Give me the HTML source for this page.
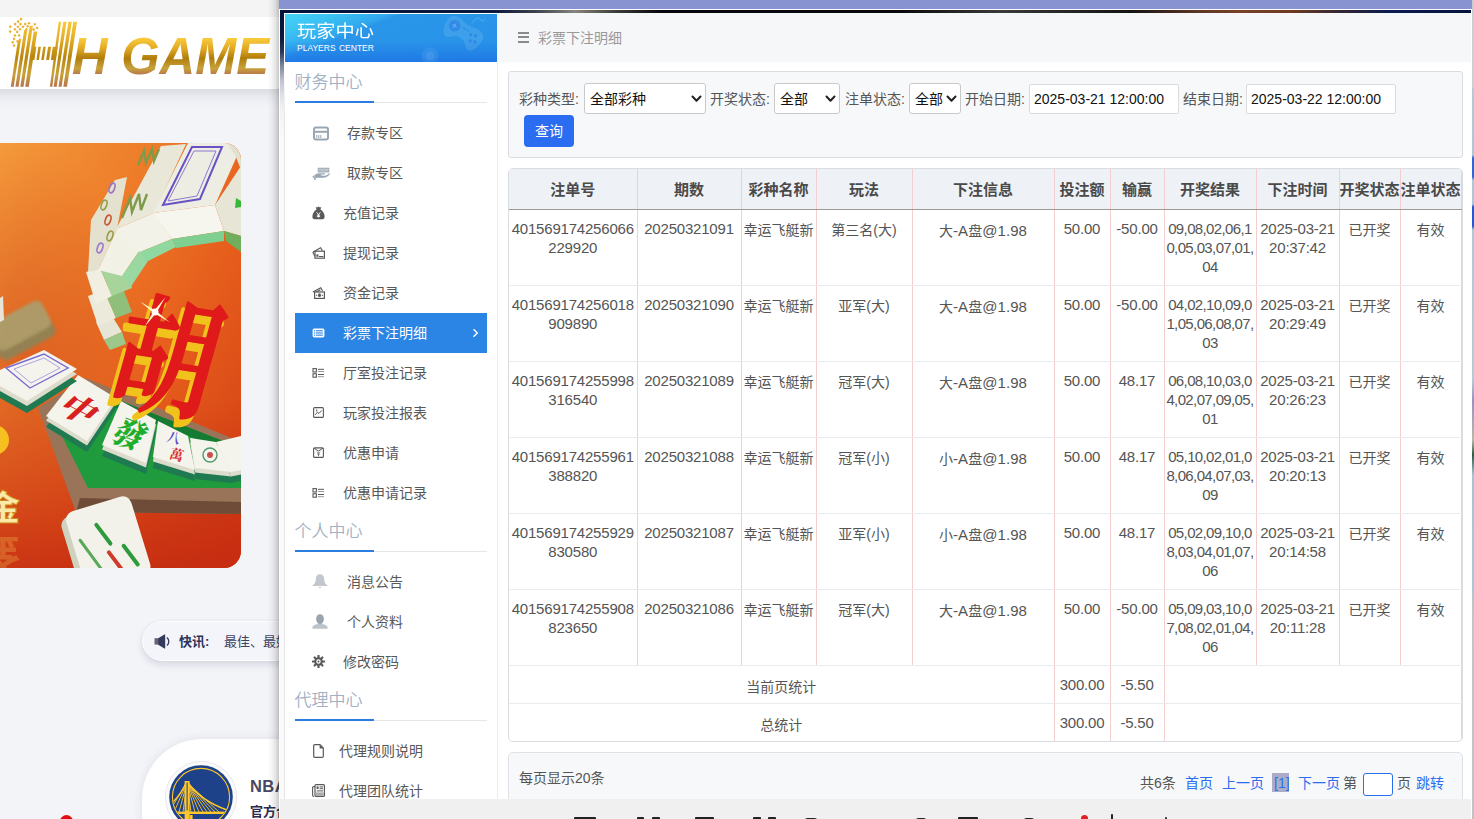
<!DOCTYPE html>
<html lang="zh-CN">
<head>
<meta charset="utf-8">
<title>玩家中心 - 彩票下注明细</title>
<style>
*{box-sizing:border-box;margin:0;padding:0}
html,body{width:1474px;height:819px;overflow:hidden}
body{position:relative;background:#f3f4f8;font-family:"Liberation Sans","Noto Sans CJK SC",sans-serif;color:#555;font-size:14px}
.abs{position:absolute}
/* ---------- underlying page ---------- */
#pg-top{left:0;top:0;width:280px;height:17px;background:#f4f4f4}
#pg-head{left:0;top:17px;width:280px;height:72px;background:#fff}
#pg-sh{left:0;top:89px;width:280px;height:19px;background:linear-gradient(180deg,rgba(20,20,40,.105) 0%,rgba(20,20,40,.05) 35%,rgba(20,20,40,.015) 70%,rgba(20,20,40,0) 100%)}
#banner{left:0;top:143px;width:241px;height:425px;border-radius:0 17px 17px 0;overflow:hidden;background:#f07a1e}
#ticker{left:142px;top:621px;width:200px;height:40px;border-radius:20px;background:#f4f5fa;border:1.5px solid #fdfdff;box-shadow:0 4px 7px rgba(40,50,100,.13),0 0 3px rgba(40,50,100,.06)}
#ticker .k{left:36px;top:9.8px;font-size:13px;line-height:20px;font-weight:bold;color:#2c3458;white-space:nowrap}
#ticker .v{left:81px;top:9.8px;font-size:13px;line-height:20px;color:#3c4462;white-space:nowrap}
#ticker svg{position:absolute;left:11px;top:11.6px}
#nba{left:142px;top:739px;width:300px;height:140px;border-radius:60px;background:#fff;box-shadow:0 0 10px rgba(40,50,100,.10)}
#nba .a{left:108px;top:37px;font-size:16.5px;line-height:20px;font-weight:bold;color:#4a4762;font-family:"Liberation Sans",sans-serif;letter-spacing:.4px}
#nba .b{left:108px;top:62.6px;font-size:13px;line-height:20px;font-weight:bold;color:#2c2c4c;white-space:nowrap}
#nba svg{position:absolute;left:22px;top:21px}
#redx{left:60px;top:815px;width:13px;height:13px;border-radius:50%;background:#e01010}
/* ---------- popup ---------- */
#pshadow{left:267px;top:0;width:12px;height:819px;background:linear-gradient(90deg,rgba(0,0,0,0) 0%,rgba(0,0,0,.03) 35%,rgba(0,0,0,.10) 70%,rgba(0,0,0,.22) 100%)}
#ptitle{left:279px;top:0;width:1193px;height:9px;background:#8893d2}
#pframe{left:279px;top:9px;width:1193px;height:810px;background:#fff}
#ftop{left:280px;top:10px;width:1191px;height:3px;background:linear-gradient(90deg,#04133c 0px,#0a1a3e 215px,#3c424c 255px,#86867e 295px,#3e3e3a 335px,#05070f 380px,#0a0a0c 620px,#3a3a3a 720px,#141414 850px,#5a3426 915px,#7a4028 960px,#6e3a24 1010px,#2a2438 1070px,#0a1c50 1110px,#04143c 1191px)}
#fleft{left:280px;top:10px;width:4px;height:809px;background:linear-gradient(180deg,#04133c 0px,#08183e 27px,#2a3858 42px,#8088a0 56px,#c0c4d0 71px,#e0e2e8 86px,#f2f2f5 100px,#fafafa 130px,#fafafa 100%)}
#fleft2{left:284px;top:13px;width:1px;height:806px;background:linear-gradient(180deg,#fff 0px,#fff 60px,#e4e4e4 110px,#e4e4e4 100%)}
#rstrip{left:1472px;top:0;width:2px;height:819px;background:linear-gradient(180deg,#cdcdcd 0px,#cfcfcf 86px,#b4c8d6 90px,#b0c6d6 155px,#2a66dc 158px,#2a66dc 177px,#b0c6d6 180px,#b0c6d6 204px,#2058d8 207px,#2058d8 226px,#b2c8d8 230px,#b4cad8 380px,#9a90c8 400px,#b8b8a8 440px,#2a5a48 455px,#a8c4d4 475px,#aac4d4 590px,#c4c4c4 610px,#c2c2c2 819px)}
#side{left:285px;top:13px;width:212px;height:786px;background:#fff;overflow:hidden}
#main{left:497px;top:13px;width:974px;height:786px;background:#fff;overflow:hidden}
#botbar{left:280px;top:799px;width:1191px;height:20px;background:#f0f0f0}

/* ---------- main panel (coords relative to #main at 497,13) ---------- */
#topbar{left:0;top:0;width:974px;height:49px;background:#f6f7f9}
#topbar .ham{left:20.5px;top:18.5px;width:11px;height:12px}
#topbar .ham i{display:block;height:2px;background:#8a8a8a;margin-bottom:2.5px}
#topbar .tt{left:41px;top:16px;font-size:14px;line-height:18px;color:#999;white-space:nowrap}
#filter{left:11px;top:58px;width:955px;height:87px;border:1px solid #d9dde2;border-radius:3px;background:#f7f8fa}
#filter .lb{font-size:14px;line-height:20px;color:#555;white-space:nowrap;top:16.6px}
.sel{background:#fff;border:1px solid #c9c9c9;border-radius:3px;height:31px;top:11px;font-size:14px;line-height:30.5px;color:#111;padding-left:5px;white-space:nowrap}
.sel svg{position:absolute;right:3px;top:11px}
.inp{background:#fff;border:1px solid #dcdcdc;border-radius:2px;height:30px;top:12px;font-size:14px;line-height:28px;color:#111;padding-left:4px;white-space:nowrap;font-family:"Liberation Sans",sans-serif}
#qbtn{left:15px;top:43px;width:50px;height:32px;border-radius:4px;background:#2a6df0;color:#fff;font-size:14px;line-height:32.5px;text-align:center}
#tblwrap{left:11px;top:155px;width:955px;height:574px;border:1px solid #d9dde2;border-radius:5px;overflow:hidden;background:#fff}
table{border-collapse:collapse;table-layout:fixed;width:952px;position:absolute;left:0;top:0}
th{height:40px;background:#eef2f7;font-size:15px;font-weight:bold;color:#4a4a4a;text-align:center;vertical-align:middle;border-right:1px solid #f5cfd0;border-bottom:1px solid #a29797;white-space:nowrap;padding:0;overflow:hidden}
td{font-size:14px;line-height:19px;color:#555;text-align:center;vertical-align:top;border-right:1px solid #f5cfd0;border-bottom:1px solid #e9ecef;padding:11px 0 0 0;height:76px;word-break:break-all;overflow:hidden}
td.n{font-family:"Liberation Sans",sans-serif;font-size:15px;letter-spacing:-0.2px}
td.rs{white-space:nowrap;letter-spacing:-0.62px}
td.n{padding-top:9.5px}
td .e{font-family:"Liberation Sans",sans-serif;font-size:15px;letter-spacing:0.1px}
tr.st td{height:38px;padding-top:12px}
tr.st td.n{padding-top:9.5px}
td .e{font-family:"Liberation Sans",sans-serif;font-size:15px;letter-spacing:0.1px}
tr.st td.lab{border-right-color:#f5cfd0}
#pager{left:11px;top:739px;width:955px;height:60px;border:1px solid #dee2e6;border-radius:5px;background:#f7f8fa}
#pager .l{left:10px;top:15px;font-size:14px;line-height:20px;color:#555;white-space:nowrap}

/* ---------- sidebar (coords relative to #side at 285,13) ---------- */
#shead{left:0;top:1px;width:212px;height:48px;background:linear-gradient(180deg,rgba(30,110,230,0) 55%,rgba(24,100,226,.55) 100%),linear-gradient(159deg,#45d3f6 0%,#3cc4f3 14%,#31a8ee 31%,#2a96e9 35%,#2792e8 100%);overflow:hidden}
#shead .t1{left:12px;top:7px;font-size:17px;line-height:22px;color:#fff;white-space:nowrap;font-weight:400;transform:scaleX(1.13);transform-origin:0 0}
#shead .t2{left:12px;top:29px;font-size:8.5px;line-height:10px;color:#fff;white-space:nowrap;font-family:"Liberation Sans",sans-serif;word-spacing:1px}
.sec{left:9.5px;font-size:17px;line-height:22px;color:#9fb1c4;font-weight:350;white-space:nowrap}
.secl{left:10px;width:192px;height:1px;background:#e3e6ea}
.secb{left:10px;width:79px;height:2.4px;background:#2b7de1}
.mi{left:10px;width:192px;height:40px}
.mi .tx{position:absolute;top:10px;font-size:14px;line-height:20px;color:#585858;white-space:nowrap}
.mi svg{position:absolute;overflow:visible}
.mi.act{background:#2b85e4}
.mi.act .tx{color:#fff}
#pager .p{top:20px;font-size:14px;line-height:20px;color:#555;white-space:nowrap}
#pager .p.a{color:#2a6df0}
#pager .cur{left:763px;top:20px;width:17px;height:19px;background:#abadc8}
#pager .box{left:854px;top:20px;width:30px;height:23px;border:1.5px solid #2a6df0;border-radius:3px;background:#fff}
</style>
</head>
<body>
<!-- underlying page -->
<div id="pg-top" class="abs"></div>
<div id="pg-head" class="abs"></div><div id="pg-sh" class="abs"></div>
<svg id="logo" class="abs" style="left:0;top:17px" width="280" height="72" viewBox="0 0 280 72">
<defs><linearGradient id="gd" gradientUnits="userSpaceOnUse" x1="0" y1="4" x2="0" y2="70"><stop offset="0" stop-color="#f9ca3c"/><stop offset=".28" stop-color="#e3ac26"/><stop offset=".55" stop-color="#b9860f"/><stop offset=".8" stop-color="#c9a23a"/><stop offset="1" stop-color="#b5734e"/></linearGradient>
<linearGradient id="gt" gradientUnits="userSpaceOnUse" x1="0" y1="21" x2="0" y2="58"><stop offset="0" stop-color="#fbcc3e"/><stop offset=".3" stop-color="#dfa722"/><stop offset=".55" stop-color="#b07d0c"/><stop offset=".82" stop-color="#c8a23c"/><stop offset="1" stop-color="#b6744e"/></linearGradient></defs>
<g fill="url(#gd)"><polygon points="10.8,69.8 13.7,69.8 20.8,23.4 17.9,23.4"/><polygon points="15.4,69.8 18.6,69.8 27.3,13.1 24.2,13.1"/><polygon points="20.3,69.8 23.5,69.8 32.9,8.7 29.7,8.7"/><polygon points="25.2,69.8 28.8,69.8 37.3,14.6 33.7,14.6"/><polygon points="49.9,69.8 52.3,69.8 61.1,4.8 58.7,4.8"/><polygon points="53.6,69.8 56.7,69.8 66.5,4.8 63.3,4.8"/><polygon points="58.5,69.8 61.6,69.8 71.8,4.8 68.4,4.8"/><polygon points="63.3,69.8 67.0,69.8 77.0,4.8 73.3,4.8"/><polygon points="31.1,42.9 34.4,42.9 36.4,29.7 33.1,29.7"/><polygon points="36.4,42.9 38.9,42.9 40.9,29.7 38.3,29.7"/><polygon points="41.3,42.9 43.8,42.9 45.8,29.7 43.2,29.7"/><polygon points="46.1,42.9 49.1,42.9 51.1,29.7 48.1,29.7"/><polygon points="50.8,42.9 55.7,42.9 57.7,29.7 52.8,29.7"/></g><g fill="#e8b02c"><rect x="19.9" y="1.0" width="2.2" height="2.2" transform="rotate(45 21.0 2.1)"/><rect x="17.0" y="3.5" width="2.2" height="2.2" transform="rotate(45 18.1 4.6)"/><rect x="14.1" y="6.0" width="2.2" height="2.2" transform="rotate(45 15.2 7.1)"/><rect x="19.4" y="6.0" width="2.2" height="2.2" transform="rotate(45 20.5 7.1)"/><rect x="24.1" y="6.0" width="2.2" height="2.2" transform="rotate(45 25.2 7.1)"/><rect x="27.9" y="5.2" width="2.2" height="2.2" transform="rotate(45 29.0 6.3)"/><rect x="33.8" y="6.2" width="2.2" height="2.2" transform="rotate(45 34.9 7.3)"/><rect x="9.2" y="8.6" width="2.2" height="2.2" transform="rotate(45 10.3 9.7)"/><rect x="16.8" y="8.6" width="2.2" height="2.2" transform="rotate(45 17.9 9.7)"/><rect x="21.9" y="8.6" width="2.2" height="2.2" transform="rotate(45 23.0 9.7)"/><rect x="26.6" y="8.1" width="2.2" height="2.2" transform="rotate(45 27.7 9.2)"/><rect x="36.0" y="9.9" width="2.2" height="2.2" transform="rotate(45 37.1 11.0)"/><rect x="13.8" y="11.1" width="2.2" height="2.2" transform="rotate(45 14.9 12.2)"/><rect x="18.9" y="11.1" width="2.2" height="2.2" transform="rotate(45 20.0 12.2)"/><rect x="25.3" y="11.1" width="2.2" height="2.2" transform="rotate(45 26.4 12.2)"/><rect x="32.6" y="11.5" width="2.2" height="2.2" transform="rotate(45 33.7 12.6)"/><rect x="9.0" y="13.5" width="2.2" height="2.2" transform="rotate(45 10.1 14.6)"/><rect x="16.0" y="13.8" width="2.2" height="2.2" transform="rotate(45 17.1 14.9)"/><rect x="13.8" y="17.4" width="2.2" height="2.2" transform="rotate(45 14.9 18.5)"/><rect x="18.0" y="17.4" width="2.2" height="2.2" transform="rotate(45 19.1 18.5)"/><rect x="12.9" y="20.8" width="2.2" height="2.2" transform="rotate(45 14.0 21.9)"/><rect x="18.9" y="21.8" width="2.2" height="2.2" transform="rotate(45 20.0 22.9)"/><rect x="11.6" y="24.2" width="2.2" height="2.2" transform="rotate(45 12.7 25.3)"/><rect x="16.3" y="23.1" width="2.2" height="2.2" transform="rotate(45 17.4 24.2)"/><rect x="12.9" y="27.5" width="2.2" height="2.2" transform="rotate(45 14.0 28.6)"/></g>
<text x="72" y="56.6" font-family="'Liberation Sans',sans-serif" font-weight="bold" font-style="italic" font-size="51" fill="url(#gt)" textLength="197" lengthAdjust="spacingAndGlyphs">H GAME</text>
</svg>
<div id="banner" class="abs"><svg width="241" height="425" viewBox="0 0 241 425" style="position:absolute;left:0;top:0">
<defs><linearGradient id="bg1" x1="0" y1="0" x2="1" y2="1"><stop offset="0" stop-color="#f49a3c"/><stop offset=".3" stop-color="#ee7e2a"/><stop offset=".6" stop-color="#e65e1c"/><stop offset="1" stop-color="#d03a14"/></linearGradient>
<linearGradient id="bg2" x1="0" y1="0" x2="0" y2="1"><stop offset=".6" stop-color="#c82a10" stop-opacity="0"/><stop offset="1" stop-color="#c22810" stop-opacity=".8"/></linearGradient><filter id="blr" x="-20%" y="-20%" width="140%" height="140%"><feGaussianBlur stdDeviation="1.6"/></filter><radialGradient id="bg3" cx=".1" cy=".5" r=".5"><stop offset="0" stop-color="#c8401a" stop-opacity=".45"/><stop offset="1" stop-color="#c8401a" stop-opacity="0"/></radialGradient></defs>
<rect width="241" height="425" fill="url(#bg1)"/><rect width="241" height="425" fill="url(#bg2)"/><rect width="241" height="425" fill="url(#bg3)"/>
<polygon points="96.0,179.0 112.0,173.0 122.0,189.0 104.0,197.0" fill="#e6e5d6" /><polygon points="104.0,197.0 122.0,189.0 126.0,201.0 110.0,207.0" fill="#9cc88c" /><polygon points="88.0,153.0 104.0,147.0 116.0,175.0 98.0,183.0" fill="#eceadb" /><polygon points="104.0,147.0 122.0,143.0 132.0,169.0 116.0,175.0" fill="#8fbf7a" /><polygon points="86.0,129.0 100.0,125.0 112.0,153.0 96.0,161.0" fill="#f0efe2" /><polygon points="100.0,125.0 124.0,119.0 132.0,145.0 112.0,153.0" fill="#a6d49a" /><polygon points="91.0,77.0 115.0,37.0 127.0,34.0 117.0,86.0 98.0,127.0 88.0,129.0" fill="#e4e2cf" /><polygon points="98.0,127.0 117.0,86.0 140.0,107.0 122.0,133.0" fill="#f2f1e6" /><polygon points="122.0,133.0 140.0,107.0 150.0,115.0 130.0,145.0" fill="#9ad8a2" /><ellipse cx="112" cy="45" rx="2.6" ry="5" fill="none" stroke="#9a78c8" stroke-width="1.6" transform="rotate(20 112 45)"/><ellipse cx="104" cy="62" rx="2.6" ry="5" fill="none" stroke="#98a04a" stroke-width="1.6" transform="rotate(20 104 62)"/><ellipse cx="108" cy="77" rx="2.6" ry="5" fill="none" stroke="#c85a3a" stroke-width="1.6" transform="rotate(20 108 77)"/><ellipse cx="100" cy="105" rx="2.6" ry="5" fill="none" stroke="#a07ac8" stroke-width="1.6" transform="rotate(20 100 105)"/><ellipse cx="110" cy="93" rx="2.6" ry="5" fill="none" stroke="#98a04a" stroke-width="1.6" transform="rotate(20 110 93)"/><polygon points="116.0,86.0 161.0,3.0 186.0,1.0 154.0,70.0" fill="#e9e8d8" /><polygon points="116.0,86.0 154.0,70.0 172.0,96.0 140.0,109.0" fill="#f3f2e8" /><polygon points="140.0,109.0 172.0,96.0 176.0,104.0 146.0,119.0" fill="#8fd8a0" /><path d="M138,22 l6,-14 l2,12 l6,-14 l2,12 l5,-12" fill="none" stroke="#7f9a4a" stroke-width="2.4"/><path d="M122,75 l8,-20 l2,14 l7,-18 l2,16 l6,-16" fill="none" stroke="#7f9a4a" stroke-width="2.4"/><polygon points="153.0,70.0 188.0,0.0 229.0,0.0 237.0,13.0 215.0,62.0" fill="#eeede3" /><polygon points="153.0,70.0 215.0,62.0 224.0,88.0 172.0,96.0" fill="#f6f5ee" /><polygon points="172.0,96.0 224.0,88.0 224.0,98.0 176.0,105.0" fill="#7fd090" /><polygon points="163.0,62.0 192.0,4.0 222.0,4.0 200.0,56.0" fill="none" stroke="#6a52c4" stroke-width="2"/><polygon points="168.0,58.0 194.0,8.0 216.0,8.0 197.0,53.0" fill="none" stroke="#8a78d4" stroke-width="1"/><polygon points="227.0,0.0 241.0,0.0 241.0,27.0 236.0,14.0" fill="#e2e1d0"/><polygon points="215.0,62.0 241.0,23.0 241.0,93.0 224.0,88.0" fill="#e6e5d6" /><polygon points="224.0,88.0 241.0,93.0 241.0,109.0 226.0,98.0" fill="#6fae5c" /><polygon points="236.0,55.0 241.0,58.0 241.0,64.0 235.0,65.0" fill="#38b838" /><polygon points="38.0,265.0 86.0,235.0 241.0,299.0 241.0,371.0 76.0,369.0" fill="#9a7458" /><polygon points="76.0,369.0 241.0,371.0 241.0,359.0 80.0,355.0" fill="#6e4c38" /><polygon points="56.0,281.0 98.0,249.0 241.0,305.0 241.0,345.0 88.0,345.0" fill="#1f9a3c" /><polygon points="56.0,281.0 98.0,249.0 241.0,305.0 241.0,313.0 100.0,259.0 64.0,287.0" fill="#157a32" /><polygon points="231.0,340.0 216.0,310.0 241.0,304.0 241.0,338.0" fill="#1f7a52" /><polygon points="231.0,333.6 216.0,303.6 241.0,297.6 241.0,331.6" fill="#dcdbcc" /><polygon points="231.0,329.0 216.0,299.0 241.0,293.0 241.0,327.0" fill="#f5f4ec" /><polygon points="195.0,336.0 190.0,306.0 216.0,310.0 231.0,340.0" fill="#1f7a52" /><polygon points="195.0,329.6 190.0,299.6 216.0,303.6 231.0,333.6" fill="#dcdbcc" /><polygon points="195.0,325.0 190.0,295.0 216.0,299.0 231.0,329.0" fill="#f5f4ec" /><circle cx="210" cy="312" r="7" fill="none" stroke="#4a9a6a" stroke-width="1.4"/><circle cx="210" cy="312" r="3" fill="#c85050"/><polygon points="153.0,325.0 158.0,289.0 188.0,304.0 195.0,338.0" fill="#1f7a52" /><polygon points="153.0,318.6 158.0,282.6 188.0,297.6 195.0,331.6" fill="#dcdbcc" /><polygon points="153.0,314.0 158.0,278.0 188.0,293.0 195.0,327.0" fill="#f5f4ec" /><polygon points="102.0,313.0 121.0,269.0 156.0,288.0 146.0,331.0" fill="#1f7a52" /><polygon points="102.0,306.6 121.0,262.6 156.0,281.6 146.0,324.6" fill="#dcdbcc" /><polygon points="102.0,302.0 121.0,258.0 156.0,277.0 146.0,320.0" fill="#f5f4ec" /><polygon points="46.0,284.0 78.0,243.0 116.0,266.0 87.0,309.0" fill="#1f7a52" /><polygon points="46.0,277.6 78.0,236.6 116.0,259.6 87.0,302.6" fill="#dcdbcc" /><polygon points="46.0,273.0 78.0,232.0 116.0,255.0 87.0,298.0" fill="#f5f4ec" /><polygon points="0.0,239.0 44.0,219.0 77.0,238.0 27.0,270.0 0.0,255.0" fill="#1f7a52" /><polygon points="0.0,232.0 44.0,212.0 77.0,231.0 27.0,263.0 0.0,248.0" fill="#dcdbcc" /><polygon points="0.0,227.0 44.0,207.0 77.0,226.0 27.0,258.0 0.0,243.0" fill="#f5f4ec" /><polygon points="6.0,225.0 44.0,211.0 68.0,225.0 30.0,245.0" fill="none" stroke="#7a6ad0" stroke-width="1.4"/><polygon points="14.0,226.0 44.0,215.0 60.0,225.0 31.0,240.0" fill="none" stroke="#9a8ce0" stroke-width=".8"/><text x="0" y="0" text-anchor="middle" dominant-baseline="central" font-family="'Noto Serif CJK SC',serif" font-weight="900" font-size="34" fill="#d82020" transform="translate(81,265) rotate(27) skewX(-20) scale(1,.9)">中</text><text x="0" y="0" text-anchor="middle" dominant-baseline="central" font-family="'Noto Serif CJK SC',serif" font-weight="900" font-size="32" fill="#1fae2c" transform="translate(131,289) rotate(20) skewX(-14) scale(.95,1.05)">發</text><text x="0" y="0" text-anchor="middle" dominant-baseline="central" font-family="'Noto Serif CJK SC',serif" font-weight="700" font-size="13" fill="#5a4ac8" transform="translate(174,294) rotate(16)">八</text><text x="0" y="0" text-anchor="middle" dominant-baseline="central" font-family="'Noto Serif CJK SC',serif" font-weight="700" font-size="14" fill="#d83030" transform="translate(177,311) rotate(16)">萬</text><g transform="translate(100,387) rotate(-17)"><rect x="-36" y="-22" width="70" height="84" rx="9" fill="#cfd2bf"/><rect x="-30" y="-26" width="68" height="82" rx="9" fill="#f2f2ea"/><g fill="none" stroke-width="4" stroke-linecap="round"><path d="M-2 -6 l8 22" stroke="#2f9a3c"/><path d="M2 24 l8 22" stroke="#d03a2a"/><path d="M18 22 l8 22" stroke="#2f9a3c"/><path d="M-22 4 l14 40" stroke="#5aa85a" stroke-width="3"/></g></g><g transform="translate(22,187) rotate(-28)" opacity=".9" filter="url(#blr)"><rect x="-32" y="-18" width="62" height="38" rx="7" fill="#8c8458"/><rect x="-30" y="-20" width="60" height="30" rx="7" fill="#a8a070"/></g><polygon points="0.0,155.0 3.0,153.0 4.0,177.0 0.0,179.0" fill="#e8e4d8" /><circle cx="-6" cy="297" r="15" fill="#f6c020"/><text x="-14" y="377" font-family="'Noto Sans CJK SC',sans-serif" font-weight="900" font-size="34" fill="#fbe9a8" stroke="#d08a18" stroke-width="1">金</text><text x="-14" y="393" font-family="'Noto Sans CJK SC',sans-serif" font-weight="900" font-size="34" fill="#e8a848" opacity=".35" transform="translate(0,790) scale(1,-1)">金</text><g transform="translate(170,206) skewY(9) skewX(-15) scale(1.0,1.3)"><text x="0" y="0" text-anchor="middle" dominant-baseline="central" font-family="'Noto Serif CJK SC',serif" font-weight="600" font-size="100" fill="#f2c21c" stroke="#f2c21c" stroke-width="4" stroke-linejoin="round" transform="translate(-3,6)">胡</text><text x="0" y="0" text-anchor="middle" dominant-baseline="central" font-family="'Noto Serif CJK SC',serif" font-weight="600" font-size="100" fill="#e01a1a" stroke="#e01a1a" stroke-width="2.5" stroke-linejoin="round">胡</text></g><g transform="translate(155,169)"><path d="M0 -18 L1.5 -1.5 L18 0 L1.5 1.5 L0 18 L-1.5 1.5 L-18 0 L-1.5 -1.5 Z" fill="#fff6c8" transform="rotate(35)"/><circle r="3.5" fill="#fff"/></g>
</svg></div>
<div id="ticker" class="abs"><svg width="17" height="15" viewBox="0 0 17 15"><rect x="0.5" y="4.2" width="4.2" height="6.4" fill="#6a6070"/><path d="M4.2 4.2 L10.4 0.4 L11.2 0.6 L11.2 14.4 L10.4 14.6 L4.2 10.8 Z" fill="#343a5c"/><path d="M13 3.4 C15.4 5.6 15.4 9.4 13 11.6" fill="none" stroke="#343a5c" stroke-width="1.3"/></svg><span class="k abs">快讯:</span><span class="v abs">最佳、最好的体育平台</span></div>
<div id="nba" class="abs"><svg width="74" height="74" viewBox="0 0 74 74"><circle cx="37" cy="37" r="35.6" fill="#fafafa"/><circle cx="37" cy="37" r="35.6" fill="none" stroke="#e8e8ee" stroke-width="1"/><circle cx="37" cy="37" r="31.8" fill="#1d428a"/><circle cx="37" cy="37" r="28.6" fill="none" stroke="#ffc72c" stroke-width="1.1"/>
<clipPath id="wcl"><circle cx="37" cy="37" r="28"/></clipPath><g clip-path="url(#wcl)"><g stroke="#ffc72c" stroke-width=".9" fill="none"><path d="M23.5 22 C32 34 46 44 63 50" stroke-width="1.4"/><path d="M22.5 22 C18 32 13 38 9 42" stroke-width="1.4"/><line x1="23" y1="22.5" x2="27" y2="52" /><line x1="23" y1="22.5" x2="31" y2="52" /><line x1="23" y1="22.5" x2="35" y2="52" /><line x1="23" y1="22.5" x2="39" y2="52" /><line x1="23" y1="22.5" x2="43" y2="52" /><line x1="23" y1="22.5" x2="47" y2="52" /><line x1="23" y1="22.5" x2="51" y2="52" /><line x1="23" y1="22.5" x2="55" y2="52" /><line x1="23" y1="22.5" x2="5" y2="52" /><line x1="23" y1="22.5" x2="10" y2="52" /><line x1="23" y1="22.5" x2="15" y2="52" /><line x1="23" y1="22.5" x2="19" y2="52" /></g>
<rect x="20.6" y="21" width="5" height="50" fill="#ffc72c"/><rect x="22.6" y="22.5" width="1" height="28" fill="#1d428a"/><rect x="8" y="51.6" width="58" height="2.4" fill="#ffc72c"/><rect x="25.6" y="55" width="3" height="14" fill="#ffc72c"/></g></svg><span class="a abs">NBA</span><span class="b abs">官方合作伙伴</span></div>
<div id="redx" class="abs"></div>
<!-- popup -->
<div id="pshadow" class="abs"></div>
<div id="ptitle" class="abs"></div>
<div id="pframe" class="abs"></div>
<div id="ftop" class="abs"></div><div id="fleft" class="abs"></div><div id="fleft2" class="abs"></div><div id="rstrip" class="abs"></div>
<div id="side" class="abs">
<div id="shead" class="abs"><div class="t1 abs">玩家中心</div><div class="t2 abs">PLAYERS CENTER</div><svg class="abs" style="left:130px;top:0" width="82" height="48" viewBox="0 0 82 48"><g transform="translate(47.5,20) rotate(32) scale(.92)"><path d="M-22 -5 C-22 -13 -14 -14.5 -7 -12.5 C-2 -11 2 -11 7 -12.5 C14 -14.5 22 -13 22 -5 C22 4 19 12 14 12 C10 12 8 6 4 5 L-4 5 C-8 6 -10 12 -14 12 C-19 12 -22 4 -22 -5 Z" fill="rgba(190,225,250,.15)"/><circle cx="-12" cy="-3" r="6.2" fill="rgba(30,110,225,.42)"/><path d="M-12 -6.5 L-11 -4 L-8.5 -3 L-11 -2 L-12 0.5 L-13 -2 L-15.5 -3 L-13 -4 Z" fill="rgba(120,185,245,.6)"/><rect x="-3" y="-7" width="3" height="1.4" fill="rgba(30,110,225,.42)"/><rect x="1.5" y="-7" width="3" height="1.4" fill="rgba(30,110,225,.42)"/><circle cx="8" cy="-4" r="1.9" fill="rgba(30,110,225,.42)"/><circle cx="13" cy="-6" r="1.9" fill="rgba(30,110,225,.42)"/><circle cx="11" cy="2" r="1.9" fill="rgba(30,110,225,.42)"/><circle cx="16" cy="0" r="1.9" fill="rgba(30,110,225,.42)"/></g><path d="M58 9 C60 3 64 3 66 6 C67 8 69 7 70 5" fill="none" stroke="rgba(190,225,250,.25)" stroke-width="1"/><circle cx="15" cy="42" r="8.5" fill="rgba(120,185,245,.16)"/><circle cx="15" cy="42" r="4.5" fill="rgba(150,200,250,.16)"/></svg></div>
<div class="sec abs" style="top:59.3px">财务中心</div><div class="secl abs" style="top:89px"></div><div class="secb abs" style="top:87.8px"></div>
<div class="mi abs" style="top:100px"><svg style="left:18px;top:13px" width="16" height="15" viewBox="0 0 16 15"><rect x="1" y="1.5" width="14" height="12" rx="2" fill="none" stroke="#9aa7b2" stroke-width="2"/><rect x="1" y="4.8" width="14" height="2" fill="#9aa7b2"/><rect x="3.3" y="9" width="1" height="3" fill="#9aa7b2"/><rect x="5.3" y="9" width="1" height="3" fill="#9aa7b2"/><rect x="7.3" y="9" width="1" height="3" fill="#9aa7b2"/></svg><span class="tx" style="left:52px">存款专区</span></div>
<div class="mi abs" style="top:140px"><svg style="left:17px;top:15px" width="18" height="13" viewBox="0 0 18 13"><rect x="6.2" y="0.2" width="10.6" height="3.8" fill="#bcc4cc" stroke="#9aa7b2" stroke-width=".9"/><path d="M2 7.8 C3.5 6 5 5.2 7 5.2 L12.5 5.2 C13.2 5.2 13.2 6.6 12.5 6.6 L8.5 6.6 C9 7.6 10 7.8 11.5 7.8 C13.5 7.8 15.5 6.8 17.3 5.2 C18 5 18.2 5.8 17.8 6.2 C15.8 8.6 13.5 9.8 11 9.8 L5 9.8 L4 10.4 Z" fill="#9aa7b2"/><path d="M0.3 8.2 L1.6 7.4 L4.2 11.4 L2.9 12.3 Z" fill="#9aa7b2"/></svg><span class="tx" style="left:52px">取款专区</span></div>
<div class="mi abs" style="top:180px"><svg style="left:17px;top:13px" width="13" height="14" viewBox="0 0 13 14"><path d="M3.6 0.9 L5 1.4 L6.5 0.6 L8 1.4 L9.4 0.9 L8.4 3.4 C11 4.8 12.8 8 12.6 11 C12.5 12.6 11.5 13.3 10 13.3 L3 13.3 C1.5 13.3 0.5 12.6 0.4 11 C0.2 8 2 4.8 4.6 3.4 Z" fill="#595959"/><path d="M4.6 6.3 L6.5 8.6 L8.4 6.3 M6.5 8.6 L6.5 11.6 M4.9 9.2 L8.1 9.2 M4.9 10.5 L8.1 10.5" stroke="#fff" stroke-width=".9" fill="none"/></svg><span class="tx" style="left:48px">充值记录</span></div>
<div class="mi abs" style="top:220px"><svg style="left:17px;top:14px" width="13" height="12" viewBox="0 0 13 12"><path d="M0.8 5.2 L8.6 0.8 L10.4 3.6" fill="none" stroke="#595959" stroke-width="1.1"/><rect x="3" y="4.2" width="9.4" height="7" fill="#fff" stroke="#595959" stroke-width="1.2"/><path d="M0.8 5.2 L3 9.2" stroke="#595959" stroke-width="1.1"/><rect x="4.4" y="7.4" width="2" height="2.4" fill="#595959"/><rect x="7" y="9" width="4.4" height="1" fill="#595959"/></svg><span class="tx" style="left:48px">提现记录</span></div>
<div class="mi abs" style="top:260px"><svg style="left:17px;top:14px" width="13" height="12" viewBox="0 0 13 12"><path d="M0.8 5 L8.8 0.8 L10.6 4 M2.6 6 L8.4 2.8" fill="none" stroke="#595959" stroke-width="1.1"/><rect x="2.6" y="5" width="9.8" height="6.4" fill="#fff" stroke="#595959" stroke-width="1.2"/><ellipse cx="7.5" cy="8.2" rx="1.5" ry="1.9" fill="#595959"/><rect x="4" y="7.8" width="1.2" height="1" fill="#595959"/><rect x="9.8" y="7.8" width="1.2" height="1" fill="#595959"/></svg><span class="tx" style="left:48px">资金记录</span></div>
<div class="mi abs act" style="top:300px"><svg style="left:17px;top:15px" width="13" height="10" viewBox="0 0 13 10"><rect x="0.6" y="0.6" width="11.8" height="8.8" rx="1.6" fill="#fff"/><rect x="3.8" y="2.2" width="7" height="1.1" fill="#2b85e4"/><rect x="3.8" y="4.4" width="7" height="1.1" fill="#2b85e4"/><rect x="3.8" y="6.6" width="7" height="1.1" fill="#2b85e4"/><rect x="2" y="2.2" width="1" height="1.1" fill="#2b85e4"/><rect x="2" y="4.4" width="1" height="1.1" fill="#2b85e4"/><rect x="2" y="6.6" width="1" height="1.1" fill="#2b85e4"/></svg><span class="tx" style="left:48px">彩票下注明细</span><svg style="left:177px;top:15px" width="7" height="10" viewBox="0 0 7 10"><path d="M1.5 1.2 L5.3 5 L1.5 8.8" fill="none" stroke="#fff" stroke-width="1.4"/></svg></div>
<div class="mi abs" style="top:340px"><svg style="left:17px;top:15px" width="13" height="10" viewBox="0 0 13 10"><rect x="1" y="0.6" width="3.4" height="3.4" fill="none" stroke="#595959" stroke-width="1.1"/><rect x="1" y="5.8" width="3.4" height="3.4" fill="none" stroke="#595959" stroke-width="1.1"/><rect x="6" y="0.8" width="6" height="1" fill="#595959"/><rect x="6" y="3" width="6" height="1" fill="#999"/><rect x="6" y="6" width="6" height="1" fill="#595959"/><rect x="6" y="8.2" width="6" height="1" fill="#999"/></svg><span class="tx" style="left:48px">厅室投注记录</span></div>
<div class="mi abs" style="top:380px"><svg style="left:18px;top:14px" width="11" height="11" viewBox="0 0 11 11"><rect x="0.6" y="0.6" width="9.8" height="9.8" rx="1" fill="none" stroke="#595959" stroke-width="1.1"/><path d="M2.2 7.8 L4.4 5.2 L6 6.4 L8.8 3.4" fill="none" stroke="#595959" stroke-width="1"/><rect x="3.2" y="2.4" width="1" height="2" fill="#595959"/></svg><span class="tx" style="left:48px">玩家投注报表</span></div>
<div class="mi abs" style="top:420px"><svg style="left:18px;top:14px" width="11" height="11" viewBox="0 0 11 11"><rect x="0.6" y="0.9" width="9.8" height="9.5" rx="1" fill="none" stroke="#595959" stroke-width="1.1"/><path d="M1 1.2 L5.5 4 L10 1.2" fill="none" stroke="#595959" stroke-width="1"/><path d="M4 4.6 L5.5 6.2 L7 4.6 M5.5 6.2 L5.5 9 M4.2 7 L6.8 7" fill="none" stroke="#777" stroke-width="1"/></svg><span class="tx" style="left:48px">优惠申请</span></div>
<div class="mi abs" style="top:460px"><svg style="left:17px;top:15px" width="13" height="10" viewBox="0 0 13 10"><rect x="1" y="0.6" width="3.4" height="3.4" fill="none" stroke="#595959" stroke-width="1.1"/><rect x="1" y="5.8" width="3.4" height="3.4" fill="none" stroke="#595959" stroke-width="1.1"/><rect x="6" y="0.8" width="6" height="1" fill="#595959"/><rect x="6" y="3" width="6" height="1" fill="#999"/><rect x="6" y="6" width="6" height="1" fill="#595959"/><rect x="6" y="8.2" width="6" height="1" fill="#999"/></svg><span class="tx" style="left:48px">优惠申请记录</span></div>
<div class="sec abs" style="top:508.3px">个人中心</div><div class="secl abs" style="top:538px"></div><div class="secb abs" style="top:536.8px"></div>
<div class="mi abs" style="top:549px"><svg style="left:17px;top:12px" width="16" height="15" viewBox="0 0 16 15"><path d="M8 0.3 C10.8 0.3 12.2 2.4 12.2 5 C12.2 8.6 13.4 10 15.4 11.4 L15.4 12 L0.6 12 L0.6 11.4 C2.6 10 3.8 8.6 3.8 5 C3.8 2.4 5.2 0.3 8 0.3 Z" fill="#c3c8cf"/><path d="M6.4 13 L9.6 13 L8 14.6 Z" fill="#c3c8cf"/></svg><span class="tx" style="left:52px">消息公告</span></div>
<div class="mi abs" style="top:589px"><svg style="left:17px;top:12px" width="16" height="15" viewBox="0 0 16 15"><path d="M0.4 14.8 L0.4 13.4 C0.4 11.6 3 10.8 5.6 10 L6.4 8.6 L9.6 8.6 L10.4 10 C13 10.8 15.6 11.6 15.6 13.4 L15.6 14.8 Z" fill="#bcc3ca"/><ellipse cx="8" cy="5" rx="3.9" ry="4.8" fill="#98a4ae"/></svg><span class="tx" style="left:52px">个人资料</span></div>
<div class="mi abs" style="top:629px"><svg style="left:17px;top:13px" width="13" height="13" viewBox="0 0 13 13"><g fill="#595959"><circle cx="6.5" cy="6.5" r="4.3"/><rect x="5.4" y="0" width="2.2" height="13" rx=".6"/><rect x="5.4" y="0" width="2.2" height="13" rx=".6" transform="rotate(45 6.5 6.5)"/><rect x="5.4" y="0" width="2.2" height="13" rx=".6" transform="rotate(90 6.5 6.5)"/><rect x="5.4" y="0" width="2.2" height="13" rx=".6" transform="rotate(135 6.5 6.5)"/></g><circle cx="6.5" cy="6.5" r="2.2" fill="#fff"/><circle cx="6.5" cy="6.5" r="1" fill="#595959"/></svg><span class="tx" style="left:48px">修改密码</span></div>
<div class="sec abs" style="top:677.3px">代理中心</div><div class="secl abs" style="top:707px"></div><div class="secb abs" style="top:705.8px"></div>
<div class="mi abs" style="top:718px"><svg style="left:18px;top:13px" width="11" height="14" viewBox="0 0 11 14"><path d="M1.8 0.7 L7 0.7 L10.3 4 L10.3 12.2 C10.3 12.9 9.9 13.3 9.2 13.3 L1.8 13.3 C1.1 13.3 0.7 12.9 0.7 12.2 L0.7 1.8 C0.7 1.1 1.1 0.7 1.8 0.7 Z" fill="none" stroke="#595959" stroke-width="1.2"/><path d="M6.6 0.7 L10.3 4.4 L6.6 4.4 Z" fill="#595959"/></svg><span class="tx" style="left:44px">代理规则说明</span></div>
<div class="mi abs" style="top:758px"><svg style="left:17px;top:13px" width="13" height="13" viewBox="0 0 13 13"><path d="M3 2.6 L1.6 2.6 C1 2.6 0.6 3 0.6 3.6 L0.6 11 C0.6 11.8 1.2 12.4 2 12.4" fill="none" stroke="#595959" stroke-width="1.1"/><rect x="3" y="0.6" width="9.4" height="11.8" rx="1" fill="#fff" stroke="#595959" stroke-width="1.2"/><rect x="4.6" y="2.4" width="2" height="2.6" fill="#595959"/><rect x="7.6" y="2.4" width="3.4" height="1" fill="#595959"/><rect x="7.6" y="4.2" width="3.4" height="1" fill="#595959"/><rect x="4.6" y="6.4" width="6.4" height="1" fill="#595959"/><rect x="4" y="8.4" width="7.6" height="3.4" fill="#aaa"/></svg><span class="tx" style="left:44px">代理团队统计</span></div>
</div>
<div id="main" class="abs">
<div class="abs" style="left:0;top:49px;width:1px;height:737px;background:#eaecef"></div><div id="topbar" class="abs"><div class="ham abs"><i></i><i></i><i></i></div><div class="tt abs">彩票下注明细</div></div>
<div id="filter" class="abs">
<span class="lb abs" style="left:10px">彩种类型:</span><div class="sel abs" style="left:75px;width:122px">全部彩种<svg width="11" height="8" viewBox="0 0 11 8"><path d="M1.5 1.5 L5.5 5.8 L9.5 1.5" fill="none" stroke="#222" stroke-width="2" stroke-linecap="round" stroke-linejoin="round"/></svg></div>
<span class="lb abs" style="left:201px">开奖状态:</span><div class="sel abs" style="left:265px;width:66px">全部<svg width="11" height="8" viewBox="0 0 11 8"><path d="M1.5 1.5 L5.5 5.8 L9.5 1.5" fill="none" stroke="#222" stroke-width="2" stroke-linecap="round" stroke-linejoin="round"/></svg></div>
<span class="lb abs" style="left:336px">注单状态:</span><div class="sel abs" style="left:400px;width:52px">全部<svg width="11" height="8" viewBox="0 0 11 8"><path d="M1.5 1.5 L5.5 5.8 L9.5 1.5" fill="none" stroke="#222" stroke-width="2" stroke-linecap="round" stroke-linejoin="round"/></svg></div>
<span class="lb abs" style="left:456px">开始日期:</span><div class="inp abs" style="left:520px;width:150px">2025-03-21 12:00:00</div>
<span class="lb abs" style="left:674px">结束日期:</span><div class="inp abs" style="left:737px;width:150px">2025-03-22 12:00:00</div>
<div id="qbtn" class="abs">查询</div>
</div>
<div id="tblwrap" class="abs">
<table><colgroup><col style="width:128px"><col style="width:104px"><col style="width:75px"><col style="width:96px"><col style="width:142px"><col style="width:56px"><col style="width:54px"><col style="width:92px"><col style="width:83px"><col style="width:61px"><col style="width:61px"></colgroup>
<thead><tr><th>注单号</th><th>期数</th><th>彩种名称</th><th>玩法</th><th>下注信息</th><th>投注额</th><th>输赢</th><th>开奖结果</th><th>下注时间</th><th>开奖状态</th><th>注单状态</th></tr></thead>
<tbody>
<tr><td class="n">401569174256066<br>229920</td><td class="n">20250321091</td><td>幸运飞艇新</td><td>第三名(大)</td><td>大<span class="e">-A</span>盘<span class="e">@1.98</span></td><td class="n">50.00</td><td class="n">-50.00</td><td class="n rs">09,08,02,06,1<br>0,05,03,07,01,<br>04</td><td class="n">2025-03-21<br>20:37:42</td><td>已开奖</td><td>有效</td></tr>
<tr><td class="n">401569174256018<br>909890</td><td class="n">20250321090</td><td>幸运飞艇新</td><td>亚军(大)</td><td>大<span class="e">-A</span>盘<span class="e">@1.98</span></td><td class="n">50.00</td><td class="n">-50.00</td><td class="n rs">04,02,10,09,0<br>1,05,06,08,07,<br>03</td><td class="n">2025-03-21<br>20:29:49</td><td>已开奖</td><td>有效</td></tr>
<tr><td class="n">401569174255998<br>316540</td><td class="n">20250321089</td><td>幸运飞艇新</td><td>冠军(大)</td><td>大<span class="e">-A</span>盘<span class="e">@1.98</span></td><td class="n">50.00</td><td class="n">48.17</td><td class="n rs">06,08,10,03,0<br>4,02,07,09,05,<br>01</td><td class="n">2025-03-21<br>20:26:23</td><td>已开奖</td><td>有效</td></tr>
<tr><td class="n">401569174255961<br>388820</td><td class="n">20250321088</td><td>幸运飞艇新</td><td>冠军(小)</td><td>小<span class="e">-A</span>盘<span class="e">@1.98</span></td><td class="n">50.00</td><td class="n">48.17</td><td class="n rs">05,10,02,01,0<br>8,06,04,07,03,<br>09</td><td class="n">2025-03-21<br>20:20:13</td><td>已开奖</td><td>有效</td></tr>
<tr><td class="n">401569174255929<br>830580</td><td class="n">20250321087</td><td>幸运飞艇新</td><td>亚军(小)</td><td>小<span class="e">-A</span>盘<span class="e">@1.98</span></td><td class="n">50.00</td><td class="n">48.17</td><td class="n rs">05,02,09,10,0<br>8,03,04,01,07,<br>06</td><td class="n">2025-03-21<br>20:14:58</td><td>已开奖</td><td>有效</td></tr>
<tr><td class="n">401569174255908<br>823650</td><td class="n">20250321086</td><td>幸运飞艇新</td><td>冠军(大)</td><td>大<span class="e">-A</span>盘<span class="e">@1.98</span></td><td class="n">50.00</td><td class="n">-50.00</td><td class="n rs">05,09,03,10,0<br>7,08,02,01,04,<br>06</td><td class="n">2025-03-21<br>20:11:28</td><td>已开奖</td><td>有效</td></tr>
<tr class="st"><td colspan="5" class="lab">当前页统计</td><td class="n">300.00</td><td class="n">-5.50</td><td colspan="4"></td></tr>
<tr class="st"><td colspan="5" class="lab">总统计</td><td class="n">300.00</td><td class="n">-5.50</td><td colspan="4"></td></tr>
</tbody></table>
</div>
<div id="pager" class="abs"><span class="l abs">每页显示20条</span><span class="p abs" style="left:631px">共6条</span><span class="p abs a" style="left:676px">首页</span><span class="p abs a" style="left:713px">上一页</span><span class="cur abs"></span><span class="p abs a" style="left:765px">[1]</span><span class="p abs a" style="left:789px">下一页</span><span class="p abs" style="left:834px">第</span><span class="box abs"></span><span class="p abs" style="left:888px">页</span><span class="p abs a" style="left:907px">跳转</span></div>
</div>
<div id="botbar" class="abs"><i class="abs" style="left:294px;top:18px;width:22px;height:8px;background:#222;border-radius:1px"></i><i class="abs" style="left:357px;top:18px;width:7px;height:8px;background:#222;border-radius:1px"></i><i class="abs" style="left:372px;top:18px;width:8px;height:8px;background:#222;border-radius:1px"></i><i class="abs" style="left:415px;top:18px;width:19px;height:8px;background:#222;border-radius:1px"></i><i class="abs" style="left:473px;top:18px;width:8px;height:8px;background:#222;border-radius:1px"></i><i class="abs" style="left:488px;top:18px;width:8px;height:8px;background:#222;border-radius:1px"></i><i class="abs" style="left:524px;top:18.5px;width:14px;height:8px;background:#222;border-radius:4px 4px 0 0"></i><i class="abs" style="left:635px;top:18.5px;width:12px;height:8px;background:#222;border-radius:4px 4px 0 0"></i><i class="abs" style="left:678px;top:18px;width:20px;height:8px;background:#222;border-radius:1px"></i><i class="abs" style="left:743px;top:18.5px;width:12px;height:8px;background:#222;border-radius:4px 4px 0 0"></i><i class="abs" style="left:801px;top:16px;width:7px;height:8px;background:#e02020;border-radius:4px 4px 0 0"></i><i class="abs" style="left:831px;top:15px;width:2px;height:8px;background:#222;border-radius:1px"></i><i class="abs" style="left:885px;top:18px;width:2px;height:8px;background:#333;border-radius:4px 4px 0 0"></i></div>
</body>
</html>
